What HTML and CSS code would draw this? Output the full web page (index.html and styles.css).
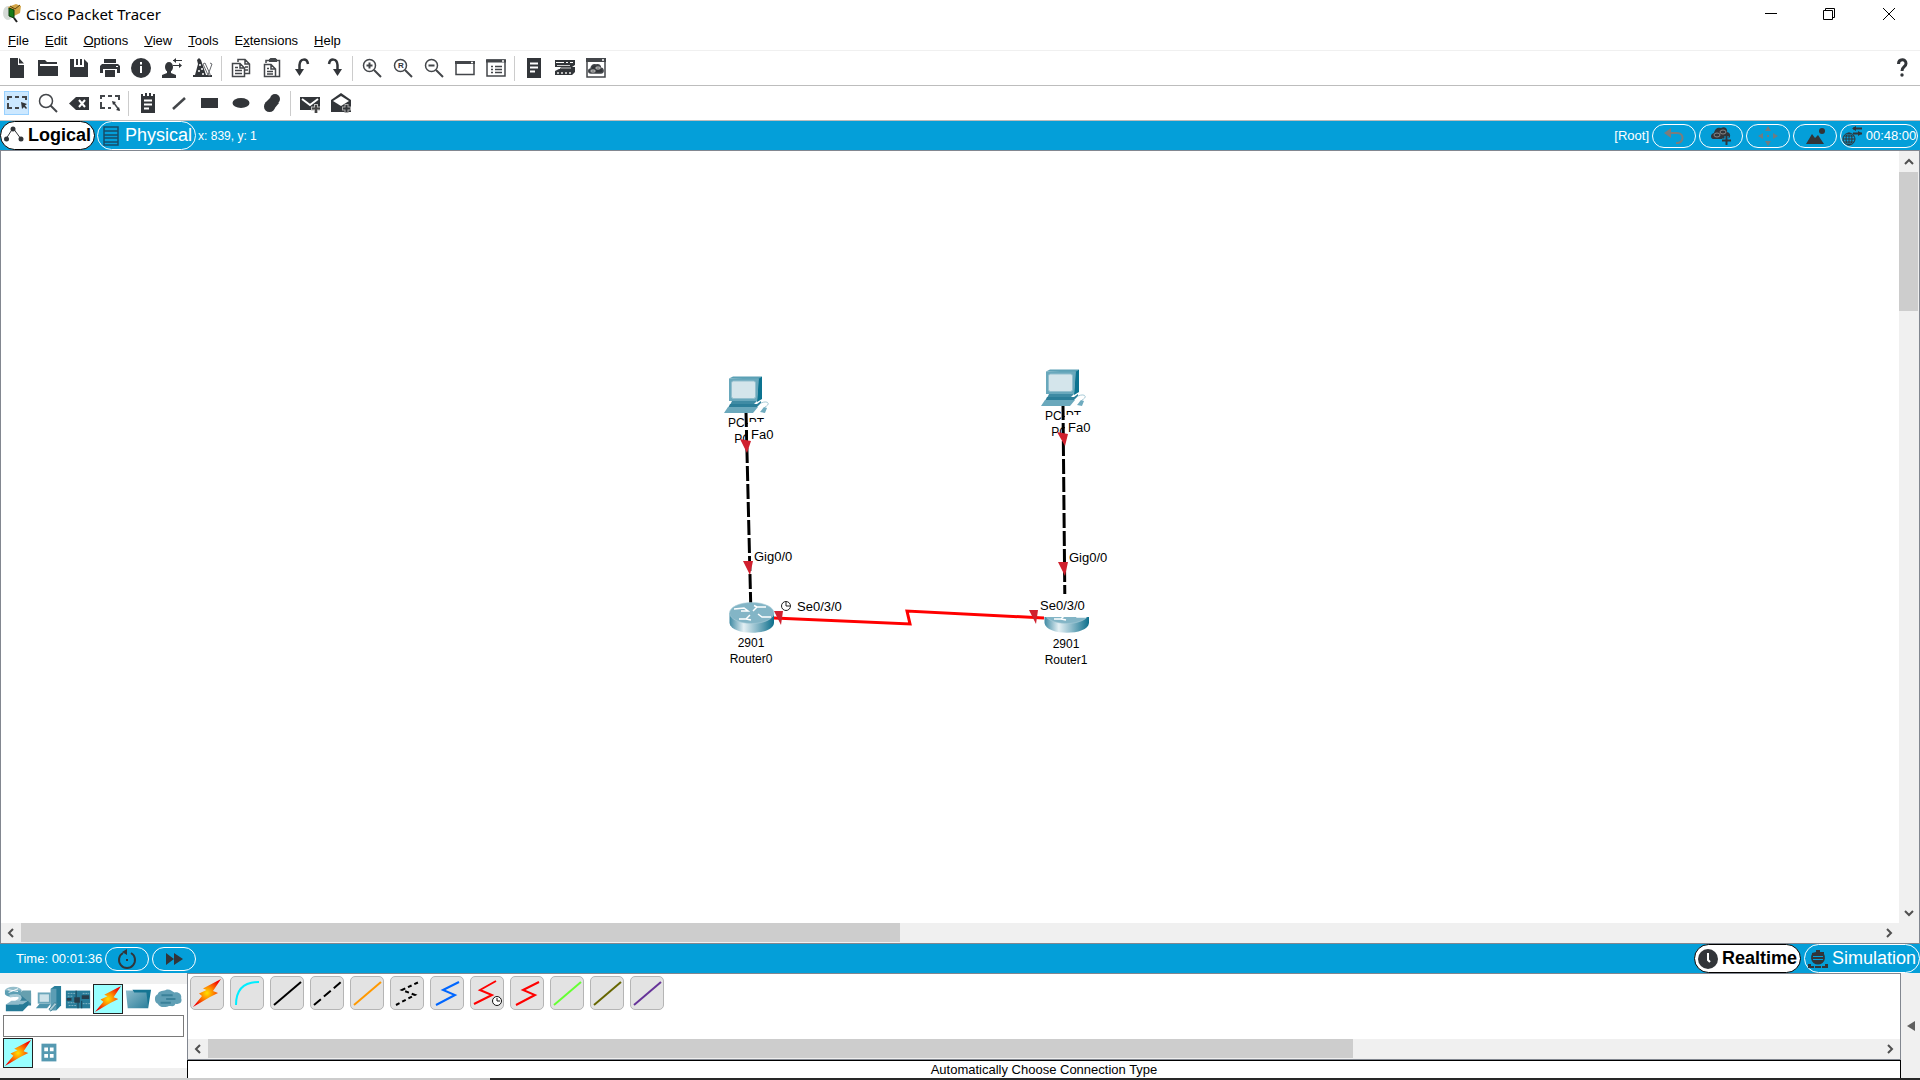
FILE: index.html
```html
<!DOCTYPE html>
<html lang="en">
<head>
    <meta charset="UTF-8">
    <meta name="viewport" content="width=device-width, initial-scale=1.0">
    <title>Cisco Packet Tracer</title>
    <link rel="stylesheet" href="styles.css">
</head>
<body>
    <!-- shared shapes -->
    <svg class="defs" aria-hidden="true">
        <defs>
            <radialGradient id="fire" cx="50%" cy="50%" r="55%">
                <stop offset="0" stop-color="#ffe000"/>
                <stop offset="0.4" stop-color="#ff8a00"/>
                <stop offset="1" stop-color="#f20000"/>
            </radialGradient>
            <linearGradient id="drum" x1="0" x2="1" y1="0" y2="0">
                <stop offset="0" stop-color="#3f8aa3"/>
                <stop offset="0.32" stop-color="#e4f0f4"/>
                <stop offset="0.6" stop-color="#8fbccb"/>
                <stop offset="1" stop-color="#0b6e8b"/>
            </linearGradient>
            <linearGradient id="steel" x1="0" x2="1" y1="0" y2="1">
                <stop offset="0" stop-color="#8dbccc"/>
                <stop offset="1" stop-color="#2c7f9b"/>
            </linearGradient>
            <symbol id="bolt" viewBox="0 0 30 30">
                <path d="M29 1 21 13 26 15 18 19 1 29 10 18 7 15.500 14.500 12 11 10.500Z" fill="url(#fire)"/>
            </symbol>
            <symbol id="pc" viewBox="0 0 46 38">
                <path d="M5 2.500 9 0.500H38L34 3.500Z" fill="#5ba0b5"/>
                <path d="M34 3 38 0.500V23L33 26Z" fill="#0c7390"/>
                <path d="M5 2.500H35L33 25H5Z" fill="#69a8bc"/>
                <rect x="7.500" y="5" width="24" height="17.500" rx="2" fill="#d4e5eb" stroke="#93bfce"/>
                <path d="M8 25H33L29 29H6Z" fill="#3f8ba4"/>
                <path d="M6 28H33L37 25V27L32 32H4Z" fill="#2c7e99"/>
                <path d="M4 31H34L29 37H0Z" fill="#6aa8bc"/>
                <path d="M37 27C44 24 47 28 41 31" fill="none" stroke="#a7cbd7"/>
                <path d="M36 36 40 31 43 32 41 37Z" fill="#6fabbf"/>
            </symbol>
            <symbol id="router" viewBox="0 0 46 32">
                <path d="M0.500 11V21C2 34 44 34 45 21V11Z" fill="url(#drum)"/>
                <ellipse cx="22.750" cy="11" rx="22.250" ry="10.500" fill="#83b5c6" stroke="#a9ccd8" stroke-width="0.600"/>
                <path d="M5 7 15 6 19 9 12 9M29 12 33 15H42M24 9 28 5 37 5M28 5 25 3.500M21 13 17 17 10 17M17 17 22 18" fill="none" stroke="#fff" stroke-width="1.500"/>
            </symbol>
        </defs>
    </svg>

    <header class="titlebar">
        <svg class="logo" viewBox="0 0 20 20">
            <ellipse cx="6" cy="9" rx="5" ry="7" fill="#d5dad6"/>
            <path d="M6 3 14 0 19 2 18 9 10 13Z" fill="#d3a548"/>
            <path d="M8 2 13 5 18 1" fill="none" stroke="#5d4510"/>
            <path d="M7 4 12 6V14L7 12Z" fill="#167c18" stroke="#0b3d0d"/>
            <path d="M12 14 15 18" stroke="#222" stroke-width="2"/>
        </svg>
        <h1>Cisco Packet Tracer</h1>
        <div class="window-buttons">
            <button aria-label="Minimize"><svg viewBox="0 0 12 12"><path d="M0 5.500H12"/></svg></button>
            <button aria-label="Restore"><svg viewBox="0 0 12 12"><path d="M0.500 2.500H9.500V11.500H0.500ZM2.500 2.500V0.500H11.500V9.500H9.500"/></svg></button>
            <button aria-label="Close"><svg viewBox="0 0 12 12"><path d="M0 0 12 12M12 0 0 12"/></svg></button>
        </div>
    </header>

    <nav class="menubar">
        <a href="#"><u>F</u>ile</a>
        <a href="#"><u>E</u>dit</a>
        <a href="#"><u>O</u>ptions</a>
        <a href="#"><u>V</u>iew</a>
        <a href="#"><u>T</u>ools</a>
        <a href="#">E<u>x</u>tensions</a>
        <a href="#"><u>H</u>elp</a>
    </nav>

    <div class="toolbar">
        <button aria-label="New"><svg viewBox="0 0 20 20"><path d="M3 0H11V7H17V20H3ZM12 0 17 5.500H12Z"/></svg></button>
        <button aria-label="Open"><svg viewBox="0 0 20 20"><path d="M0 2H7L9 4H19V6H2V8H20V18H0Z"/></svg></button>
        <button aria-label="Save"><svg viewBox="0 0 20 20"><path d="M1 1H5V9H15V1L19 5V19H1ZM7 1H9V7H7ZM11 1H13V7H11Z"/></svg></button>
        <button aria-label="Print"><svg viewBox="0 0 20 20"><path d="M4 1H16V5H4ZM2 6H18L20 8V15H17V11H3V15H0V8ZM5 12H15V19H5Z"/><path d="M16 8.500H18" stroke="#fff"/></svg></button>
        <button aria-label="Info"><svg viewBox="0 0 20 20"><circle cx="10" cy="10" r="10"/><path d="M10 4V6.500M10 8V15" stroke="#fff" stroke-width="2"/></svg></button>
        <button aria-label="User profile"><svg viewBox="0 0 20 20"><ellipse cx="7" cy="9" rx="4" ry="5"/><path d="M5 12H9V15L14 17V20H0V17L5 15Z"/><path d="M11 2.500H20M11 7.500H19" stroke="#323539"/><path d="M11 2.500 14 0V5ZM20 7.500 17 5V10Z"/></svg></button>
        <button aria-label="Palette"><svg viewBox="0 0 20 20"><path d="M4 2 6 0 8 2 13 17H19V19H0V17H2L5 6Z"/><g fill="#fff"><circle cx="7" cy="7" r="1"/><circle cx="9" cy="11" r="1"/><circle cx="6" cy="13" r="1"/><circle cx="10" cy="16" r="1"/></g><path d="M10 6 12 5 17 16V18L15 17ZM17 5 19 6 15 17" stroke="#66686c" fill="none"/></svg></button>
        <span class="sep"></span>
        <button aria-label="Copy"><svg class="line" viewBox="0 0 20 20"><path d="M7 4V1.500H14L18.500 6V15.500H14M14 2V6H18M1.500 5.500H9L13.500 10V18.500H1.500ZM9 6V10H13M4 9.500H7M4 12.500H11M4 15.500H11M14 9H17M14 12H17"/></svg></button>
        <button aria-label="Paste"><svg class="line" viewBox="0 0 20 20"><path d="M4 5V2.500H17.500V18.500H14M7 2.500 9 0.500H13L15 2.500ZM2.500 6.500H9L13.500 11V18.500H2.500ZM9 7V11H13M5 10.500H7M5 13.500H11M5 16H11"/><path d="M7 1H15V4H7Z" fill="#43464a" stroke="none"/></svg></button>
        <button aria-label="Undo"><svg viewBox="0 0 20 20"><path d="M15 6C14 0 7 0 6.500 7V13" fill="none" stroke="#323539" stroke-width="2.500"/><path d="M2 11H11L6.500 18Z"/></svg></button>
        <button aria-label="Redo"><svg viewBox="0 0 20 20"><path d="M5 6C6 0 13 0 13.500 7V13" fill="none" stroke="#323539" stroke-width="2.500"/><path d="M9 11H18L13.500 18Z"/></svg></button>
        <span class="sep"></span>
        <button aria-label="Zoom in"><svg class="line" viewBox="0 0 20 20"><circle cx="7.500" cy="7.500" r="6"/><path d="M12 12 19 19M4.500 7.500H10.500M7.500 4.500V10.500" stroke-width="2"/></svg></button>
        <button aria-label="Zoom reset"><svg class="line" viewBox="0 0 20 20"><circle cx="7.500" cy="7.500" r="6"/><path d="M12 12 19 19" stroke-width="2"/><text x="5" y="10">R</text></svg></button>
        <button aria-label="Zoom out"><svg class="line" viewBox="0 0 20 20"><circle cx="7.500" cy="7.500" r="6"/><path d="M12 12 19 19M4.500 7.500H10.500" stroke-width="2"/></svg></button>
        <button aria-label="Viewport"><svg class="line" viewBox="0 0 20 20"><path d="M1 4.500H19V16.500H1Z"/><path d="M0 4.500H20" stroke-width="3"/><path d="M16 4.500H18" stroke="#fff"/></svg></button>
        <button aria-label="Dialog"><svg class="line" viewBox="0 0 20 20"><path d="M1 2H19V18H1Z"/><path d="M0 3H20" stroke-width="3"/><path d="M16 3H18" stroke="#fff"/><path d="M5 8.500H7M9 8.500H16M5 11.500H7M9 11.500H16M5 14.500H7M9 14.500H16"/></svg></button>
        <span class="sep"></span>
        <button aria-label="Command log"><svg viewBox="0 0 20 20"><path d="M3 0H17V20H3Z"/><path d="M6 5.500H14M6 9.500H14M6 13.500H11" stroke="#fff" stroke-width="2"/></svg></button>
        <button aria-label="Custom devices"><svg viewBox="0 0 20 20"><path d="M0 2H20V7L17 9H20V14L17 17H0V13L4 11H5L6 9H0Z"/><path d="M1 4.500H9M11 4.500H13M15 4.500H18" stroke="#fff"/><path d="M2 7.500H15M6 10H16" stroke="#ccc"/><path d="M2 15H16" stroke="#bbb" stroke-width="2" stroke-dasharray="2 2"/></svg></button>
        <button aria-label="Cluster"><svg class="line" viewBox="0 0 20 20"><path d="M1 1.500H19V19H1Z"/><path d="M0 2H20" stroke-width="4"/><path d="M16 2H18" stroke="#fff"/><path d="M5 15C2 15 2 11 5 11C5 8 7 6 10 7C13 6 15 8 14 10C18 10 18 15 15 15Z" fill="#323539"/><ellipse cx="7" cy="13" rx="2" ry="1" stroke="#aaa"/><ellipse cx="12" cy="10" rx="2" ry="1" stroke="#aaa"/></svg></button>
        <button class="help" aria-label="Help"><svg viewBox="0 0 20 20"><path d="M6.500 6C6.500 0.500 14 0.500 14 5.500C14 9 10 8.500 10 13" fill="none" stroke="#323539" stroke-width="3"/><circle cx="10" cy="17" r="1.700"/></svg></button>
    </div>

    <div class="toolbar">
        <button class="active" aria-label="Select"><svg class="line" viewBox="0 0 20 20"><path d="M1 7V4H5M8 4H12M15 4H19V7M1 10V15H5M8 15H12" stroke-width="2"/><path d="M14 9 20 11 18 12.500 20 15 19 16 17 14 15 16Z" fill="#323539" stroke="none"/></svg></button>
        <button aria-label="Inspect"><svg class="line" viewBox="0 0 20 20"><circle cx="8" cy="8" r="6.500"/><path d="M12.500 12.500 19 19" stroke-width="2"/></svg></button>
        <button aria-label="Delete"><svg viewBox="0 0 20 20"><path d="M7 4H20V17H7L0 10.500Z"/><path d="M10 7 16 14M16 7 10 14" stroke="#fff" stroke-width="2"/></svg></button>
        <button aria-label="Resize shape"><svg class="line" viewBox="0 0 20 20"><path d="M1 6V3H5M8 3H12M15 3H19V7M1 9V15H5M8 15H11" stroke-width="2"/><path d="M14 10 19 17"/><path d="M12 8 16 9 13 12ZM20 18 16 17 19 14Z" fill="#323539" stroke="none"/></svg></button>
        <span class="sep"></span>
        <button aria-label="Place note"><svg viewBox="0 0 20 20"><path d="M3 1H5V3H7V0H9V3H11V0H13V3H15V1H17V20H3Z"/><path d="M6 7.500H14M6 11.500H14M6 15.500H11" stroke="#fff" stroke-width="2"/></svg></button>
        <button aria-label="Draw line"><svg class="line" viewBox="0 0 20 20"><path d="M4 16 16 5" stroke-width="2.500"/></svg></button>
        <button aria-label="Draw rectangle"><svg viewBox="0 0 20 20"><path d="M1 5H18V15H1Z"/></svg></button>
        <button aria-label="Draw ellipse"><svg viewBox="0 0 20 20"><ellipse cx="10" cy="10" rx="8.500" ry="5"/></svg></button>
        <button aria-label="Draw freeform"><svg viewBox="0 0 20 20"><circle cx="13" cy="6" r="5"/><circle cx="7.500" cy="13.500" r="5.500"/><path d="M8 5 17 10 12 16 3 10Z"/></svg></button>
        <span class="sep"></span>
        <button aria-label="Add simple PDU"><svg viewBox="0 0 20 20"><path d="M0 4H20V17H0Z"/><path d="M2 6 10 12 18 6" fill="none" stroke="#fff" stroke-width="2"/><path d="M16 11V20M11 15.500H20" stroke="#bbb" stroke-width="4"/><path d="M16 12V20M12 15.500H20" stroke="#444" stroke-width="2"/></svg></button>
        <button aria-label="Add complex PDU"><svg viewBox="0 0 20 20"><path d="M0 7 10 0 20 7V19H0Z"/><path d="M2 8 10 3 18 8 10 13Z" fill="#fff"/><path d="M15.500 11V20M11 15.500H20" stroke="#aaa" stroke-width="4"/><path d="M15.500 12V19M12 15.500H19" stroke="#323539" stroke-width="2"/></svg></button>
    </div>

    <div class="bluebar">
        <button class="tab selected"><svg viewBox="0 0 20 20"><path d="M2 13 9 2 17 13" fill="none" stroke="#323539"/><circle cx="2.500" cy="13" r="2.500"/><circle cx="9" cy="3" r="2.500"/><circle cx="17" cy="13" r="2.500"/></svg>Logical</button>
        <button class="tab"><svg viewBox="0 0 20 20"><path d="M3 1H17V19H3ZM3 5H17M3 9H17M3 12H17M3 16H17" fill="none" stroke="#164d69" stroke-width="1.500"/></svg>Physical</button>
        <span class="coords">x: 839, y: 1</span>
        <div class="bar-right">
            <span>[Root]</span>
            <button class="pill" aria-label="Back"><svg viewBox="0 0 20 20"><path d="M5 7H13C21 7 20 18 12 17" fill="none" stroke="#7c7c7c" stroke-width="2"/><path d="M0 7 7 2V12Z" fill="#7c7c7c"/></svg></button>
            <button class="pill" aria-label="New cluster"><svg viewBox="0 0 20 20"><path d="M3 13C-1 13-1 8 3 7C4 2 7 1 10 2C14 0 17 3 16 6C20 7 20 11 17 13Z"/><ellipse cx="6" cy="9" rx="3" ry="2" fill="none" stroke="#888"/><ellipse cx="12" cy="6" rx="3" ry="2" fill="none" stroke="#888"/><path d="M15.500 10V19M11 14.500H20" stroke="#049fd9" stroke-width="4"/><path d="M15.500 10V19M11 14.500H20" stroke="#323539" stroke-width="2"/></svg></button>
            <button class="pill" aria-label="Move object"><svg viewBox="0 0 20 20"><path d="M10 0 13 5H7ZM10 20 13 15H7ZM0 10 5 7V13ZM20 10 15 7V13ZM9 9H11V11H9Z" fill="#6f7c82"/></svg></button>
            <button class="pill" aria-label="Set background"><svg viewBox="0 0 20 20"><path d="M1 18 7 8 10 12 13 9 19 18Z"/><circle cx="17" cy="5" r="3"/></svg></button>
            <button class="pill clock" aria-label="Environment time 00:48:00"><svg viewBox="0 0 20 20"><g fill="none" stroke="#323539"><circle cx="7" cy="13" r="6"/><ellipse cx="7" cy="13" rx="3" ry="6"/><path d="M7 7V19M1 13H13M2 10H12M2 16H12"/><path d="M11 2.500H20M11 7.500H20" stroke-width="2"/></g><path d="M10 2.500 14 0V5ZM20 7.500 16 5V10Z"/></svg>00:48:00</button>
        </div>
    </div>

    <main class="workspace">
        <svg class="topology" role="img" aria-label="Network topology">
            <g transform="translate(-1 -151)">
                <g class="labels">
                    <text x="746" y="427">PC-PT</text>
                    <text x="746" y="443">PC0</text>
                    <text x="1063" y="420">PC-PT</text>
                    <text x="1063" y="436">PC1</text>
                    <text x="751" y="647">2901</text>
                    <text x="751" y="663">Router0</text>
                    <text x="1066" y="648">2901</text>
                    <text x="1066" y="664">Router1</text>
                </g>
                <path class="crossover" d="M746 412 751 616M1063 405 1065 616"/>
                <use href="#pc" x="724" y="376" width="46" height="38"/>
                <use href="#pc" x="1041" y="369" width="46" height="38"/>
                <use href="#router" x="729" y="602" width="46" height="32"/>
                <use href="#router" x="1044" y="602" width="46" height="32"/>
                <!-- interface labels sit on white boxes -->
                <path fill="#fff" d="M748 422H776V445H748ZM751 546H795V566H751ZM1065 415H1093V438H1065ZM1066 547H1110V567H1066ZM1037 594H1092V617H1037Z"/>
                <path class="serial" d="M774 618 910 624 907 611 1044 618"/>
                <g class="ports">
                    <text x="751" y="439">Fa0</text>
                    <text x="754" y="561">Gig0/0</text>
                    <text x="797" y="611">Se0/3/0</text>
                    <text x="1068" y="432">Fa0</text>
                    <text x="1069" y="562">Gig0/0</text>
                    <text x="1040" y="610">Se0/3/0</text>
                </g>
                <path fill="#d0202e" d="M740 439 751 441 747 453ZM743 561H753L750 575ZM774 611H783L781 625ZM1057 432 1068 434 1065 446ZM1058 562H1068L1065 576ZM1029 610H1038L1036 624Z"/>
                <g fill="none" stroke="#222"><circle cx="786" cy="606" r="4.500"/><path d="M786 602V606H790"/></g>
            </g>
        </svg>
        <div class="vscroll">
            <button aria-label="Scroll up"><svg viewBox="0 0 10 10"><path d="M1 7 5 3 9 7"/></svg></button>
            <div class="track"><div class="thumb"></div></div>
            <button aria-label="Scroll down"><svg viewBox="0 0 10 10"><path d="M1 3 5 7 9 3"/></svg></button>
        </div>
        <div class="hscroll">
            <button aria-label="Scroll left"><svg viewBox="0 0 10 10"><path d="M7 1 3 5 7 9"/></svg></button>
            <div class="track"><div class="thumb"></div></div>
            <button aria-label="Scroll right"><svg viewBox="0 0 10 10"><path d="M3 1 7 5 3 9"/></svg></button>
        </div>
    </main>

    <div class="bluebar timebar">
        <span class="time">Time: 00:01:36</span>
        <button class="pill" aria-label="Power cycle devices"><svg viewBox="0 0 20 20"><path d="M6 4A8 8 0 1 0 14 4" fill="none" stroke="#323539" stroke-width="2"/><path d="M5 3 10 0V6ZM9 10H11V12H9Z"/></svg></button>
        <button class="pill" aria-label="Fast forward"><svg viewBox="0 0 20 20"><path d="M2 4 10 10V4L19 10 10 16V10L2 16Z"/></svg></button>
        <div class="modes">
            <button class="tab selected"><svg viewBox="0 0 20 20"><circle cx="10" cy="10" r="10"/><path d="M10 4V11L12 13" fill="none" stroke="#fff" stroke-width="2"/></svg>Realtime</button>
            <button class="tab"><svg viewBox="0 0 20 20"><path d="M8 1H12V3H16V5A7 7 0 1 1 4 5V4L8 3ZM0 15H3V17H6V19H0ZM7 17H13V19H7ZM17 15H20V19H14V17H17Z"/><path d="M5 7.500H15M5 10.500H15" stroke="#049fd9"/></svg>Simulation</button>
        </div>
    </div>

    <footer class="bottom">
        <section class="categories">
            <div class="cell-row">
                <button aria-label="Network devices"><svg viewBox="0 0 30 30"><path d="M16 9H29V22H16Z" fill="#377f99"/><path d="M16 9 20 6H29V20" fill="#669faf"/><ellipse cx="10" cy="6" rx="9" ry="4" fill="#94bdca"/><path d="M1 6V10C4 14 14 14 18 9V6Z" fill="#5c9fb4"/><path d="M4 5 15 7M5 8 15 4" stroke="#fff"/><path d="M6 12C18 9 21 14 13 18" fill="none" stroke="#a5c9d5" stroke-width="3"/><path d="M2 21 8 17H26L20 21Z" fill="#8ebaca"/><path d="M2 21H20L26 17V22L20 28H2Z" fill="#267a96"/></svg></button>
                <button aria-label="End devices"><svg viewBox="0 0 30 30"><path d="M18 4 22 1H29V22L24 27H18Z" fill="#287e9a"/><path d="M18 4H24V27H18Z" fill="#5b9db4"/><path d="M4 8H18V20H4Z" fill="#6ba6ba"/><path d="M6 10H16V18H6Z" fill="#cde2e9"/><path d="M6 20H18L14 25H2Z" fill="#4d94ac"/><path d="M16 26 22 19 25 20 18 28Z" fill="#a9cad5" stroke="#397f97"/></svg></button>
                <button aria-label="Components"><svg viewBox="0 0 30 30"><path d="M2 6H28V25H2Z" fill="#287c99"/><path d="M4 9H12M4 12H10M4 19H12M20 9H27M20 20H28M5 22H14" stroke="#89b8c7" stroke-dasharray="2 1"/><path d="M11 13H17V19H11ZM19 11H27V15H19ZM3 14H8V17H3Z" fill="#263d4b"/><path d="M13 6V13M15 19V25M19 17V25" stroke="#173d50"/></svg></button>
                <button class="picked" aria-label="Connections"><svg><use href="#bolt"/></svg></button>
                <button aria-label="Miscellaneous"><svg viewBox="0 0 30 30"><path d="M9 5H29L26 24H18Z" fill="#157593"/><path d="M2 6H9L11 8H24L26 25H4Z" fill="url(#steel)"/></svg></button>
                <button aria-label="Multiuser connection"><svg viewBox="0 0 30 30"><path d="M4 20C0 19 0 11 4 10C5 5 11 7 13 5C17 4 20 7 22 8C28 7 30 12 29 14C31 19 27 21 23 20C21 25 17 21 15 23C10 24 6 24 4 20Z" fill="#609fb5"/><path d="M8 11H20M13 15H23M7 19H18" stroke="#3a8199" stroke-width="2"/></svg></button>
            </div>
            <input type="text" aria-label="Device">
            <div class="cell-row">
                <button class="picked" aria-label="All connections"><svg><use href="#bolt"/></svg></button>
                <button aria-label="Structured cabling"><svg viewBox="0 0 30 30"><path d="M8 5H24V24H8Z" fill="#5599b1"/><path d="M11 9H15V13H11ZM17 9H21V13H17ZM11 16H15V20H11ZM17 16H21V20H17Z" fill="#fff"/></svg></button>
            </div>
        </section>

        <section class="connections">
            <div class="picker">
                <div class="cables">
                    <button aria-label="Automatic"><svg><use href="#bolt"/></svg></button>
                    <button aria-label="Console"><svg viewBox="0 0 30 30"><path d="M4 27C4 12 12 4 27 4" stroke="#0ef"/></svg></button>
                    <button aria-label="Copper straight-through"><svg viewBox="0 0 30 30"><path d="M2 27 29 4" stroke="#000"/></svg></button>
                    <button aria-label="Copper cross-over"><svg viewBox="0 0 30 30"><path d="M2 27 29 4" stroke="#000" stroke-dasharray="9 4"/></svg></button>
                    <button aria-label="Fiber"><svg viewBox="0 0 30 30"><path d="M2 27 29 4" stroke="#f90"/></svg></button>
                    <button aria-label="Phone"><svg viewBox="0 0 30 30"><path d="M4 27 23 17 10 12 27 4" stroke="#000" stroke-dasharray="4 3"/></svg></button>
                    <button aria-label="Coaxial"><svg viewBox="0 0 30 30"><path d="M4 27 23 17 11 12 27 4" stroke="#06f"/></svg></button>
                    <button aria-label="Serial DCE"><svg viewBox="0 0 30 30"><path d="M2 26 20 17 8 12 24 3" stroke="#f00"/><circle cx="25" cy="23" r="4.500" fill="#fff" stroke="#111" stroke-width="1"/><path d="M25 20V23H28" stroke="#111" stroke-width="1"/></svg></button>
                    <button aria-label="Serial DTE"><svg viewBox="0 0 30 30"><path d="M4 27 23 17 11 12 27 4" stroke="#f00"/></svg></button>
                    <button aria-label="Octal"><svg viewBox="0 0 30 30"><path d="M2 27 29 4" stroke="#6f3"/></svg></button>
                    <button aria-label="IoE custom cable"><svg viewBox="0 0 30 30"><path d="M2 27 29 4" stroke="#660"/></svg></button>
                    <button aria-label="USB"><svg viewBox="0 0 30 30"><path d="M2 27 29 4" stroke="#639"/></svg></button>
                </div>
                <div class="hscroll">
                    <button aria-label="Scroll left"><svg viewBox="0 0 10 10"><path d="M7 1 3 5 7 9"/></svg></button>
                    <div class="track"><div class="thumb wide"></div></div>
                    <button aria-label="Scroll right"><svg viewBox="0 0 10 10"><path d="M3 1 7 5 3 9"/></svg></button>
                </div>
            </div>
            <p class="hint">Automatically Choose Connection Type</p>
        </section>

        <button class="expand" aria-label="Show PDU list"><svg viewBox="0 0 8 10"><path d="M0 5 8 0V10Z"/></svg></button>
    </footer>
    <div class="taskbar"><span></span><span></span></div>
</body>
</html>
```

FILE: styles.css
```css
* {
    margin: 0;
    padding: 0;
    box-sizing: border-box;
}

body {
    display: flex;
    flex-direction: column;
    height: 100vh;
    overflow: hidden;
    background: #fff;
    color: #000;
    font-family: "Liberation Sans", Arial, sans-serif;
    font-size: 13px;
}

button {
    display: flex;
    align-items: center;
    justify-content: center;
    flex-shrink: 0;
    border: none;
    background: none;
    font: inherit;
    color: inherit;
}

svg {
    display: block;
    fill: #323539;
}

.defs {
    position: absolute;
    width: 0;
    height: 0;
}

/* title and menu */
.titlebar {
    display: flex;
    align-items: center;
    height: 28px;
    padding-left: 2px;
}

.logo {
    width: 20px;
    height: 20px;
    margin-right: 4px;
}

.titlebar h1 {
    font-family: "Noto Sans", sans-serif;
    font-size: 15px;
    font-weight: normal;
}

.window-buttons {
    display: flex;
    margin-left: auto;
}

.window-buttons button {
    width: 58px;
    height: 28px;
}

.window-buttons button:last-child {
    width: 62px;
}

.window-buttons svg {
    width: 12px;
    height: 12px;
    fill: none;
    stroke: #000;
}

.menubar {
    display: flex;
    gap: 16px;
    height: 23px;
    padding: 5px 8px 0;
    border-bottom: 1px solid #f0f0f0;
}

.menubar a {
    color: #000;
    text-decoration: none;
}

/* toolbars */
.toolbar {
    display: flex;
    align-items: center;
    gap: 6px;
    height: 35px;
    padding: 0 6px 0 4px;
    border-bottom: 1px solid #bdbdbd;
}

.toolbar button {
    width: 25px;
    height: 24px;
}

.toolbar svg {
    width: 20px;
    height: 20px;
}

.toolbar .line {
    fill: none;
    stroke: #43464a;
    stroke-width: 1.5;
}

.toolbar text {
    fill: #323539;
    stroke: none;
    font-size: 8px;
    font-weight: bold;
}

.toolbar .active {
    background: #cce8ff;
    border: 1px solid #99d1ff;
}

.sep {
    width: 1px;
    height: 25px;
    background: #ccc;
}

.toolbar .help {
    margin-left: auto;
}

/* blue bars */
.bluebar {
    display: flex;
    align-items: center;
    flex-shrink: 0;
    gap: 2px;
    height: 29px;
    background: #049fd9;
    color: #fff;
}

.tab {
    gap: 4px;
    height: 29px;
    padding: 0 3px;
    border: 1px solid #fff;
    border-radius: 15px;
    font-size: 18px;
}

.tab.selected {
    background: #fff;
    border-color: #000;
    color: #000;
    font-weight: bold;
}

.tab svg,
.pill svg {
    width: 20px;
    height: 20px;
}

.coords {
    font-size: 12px;
}

.bar-right,
.modes {
    display: flex;
    align-items: center;
    gap: 3px;
    margin-left: auto;
}

.bar-right {
    padding-right: 2px;
}

.pill {
    width: 44px;
    height: 24px;
    border: 1px solid #fff;
    border-radius: 12px;
}

.pill.clock {
    gap: 4px;
    width: 78px;
}

.timebar {
    gap: 3px;
    padding-left: 16px;
}

/* workspace */
.workspace {
    display: grid;
    grid-template-columns: 1fr 20px;
    grid-template-rows: 1fr 20px;
    flex: 1;
    min-height: 0;
    border: 1px solid #828790;
    background: #f0f0f0;
}

.topology {
    width: 100%;
    height: 100%;
    background: #fff;
}

.labels,
.ports {
    fill: #000;
    font-size: 13px;
}

.labels {
    font-size: 12px;
    text-anchor: middle;
}

.crossover {
    fill: none;
    stroke: #000;
    stroke-width: 3;
    stroke-dasharray: 15 3;
}

.serial {
    fill: none;
    stroke: #f00;
    stroke-width: 3;
}

.vscroll,
.hscroll {
    display: flex;
    background: #f0f0f0;
}

.vscroll {
    flex-direction: column;
    padding-right: 1px;
}

.hscroll {
    padding-bottom: 1px;
}

.vscroll button {
    width: 19px;
    height: 21px;
}

.hscroll button {
    width: 20px;
    height: 19px;
}

.vscroll svg,
.hscroll svg {
    width: 10px;
    height: 10px;
    fill: none;
    stroke: #505050;
    stroke-width: 2;
}

.track {
    flex: 1;
}

.thumb {
    width: 47.3%;
    height: 100%;
    background: #cdcdcd;
}

.thumb.wide {
    width: 68.5%;
}

.vscroll .thumb {
    width: 100%;
    height: 19%;
}

/* bottom panels */
.bottom {
    display: flex;
    flex-shrink: 0;
    background: #f0f0f0;
}

.categories {
    width: 187px;
    margin: 11px 0 10px;
    padding: 0 3px;
    background: #fff;
}

.cell-row {
    display: flex;
}

.cell-row button {
    width: 30px;
    height: 30px;
}

.cell-row svg {
    width: 28px;
    height: 28px;
}

.cell-row .picked {
    background: #9ff;
    border: 1px solid #222;
}

.categories input {
    display: block;
    width: 100%;
    height: 22px;
    margin: 1px 0;
    border: 1px solid #7a7a7a;
}

.connections {
    display: flex;
    flex-direction: column;
    flex: 1;
    min-width: 0;
}

.picker {
    border: 1px solid #828790;
    background: #fff;
}

.cables {
    display: flex;
    gap: 6px;
    height: 65px;
    padding: 2px;
}

.cables button {
    width: 34px;
    height: 34px;
    border: 1px solid #b5b5b5;
    border-radius: 5px;
    background: #e3e3e3;
}

.cables svg {
    width: 30px;
    height: 30px;
    fill: none;
    stroke-width: 2;
}

.hint {
    flex: 1;
    border: 1px solid #000;
    border-bottom: none;
    background: #fff;
    line-height: 17px;
    text-align: center;
}

.expand {
    width: 19px;
}

.expand svg {
    width: 8px;
    height: 10px;
    fill: #606060;
}

.taskbar {
    display: flex;
    flex-shrink: 0;
    height: 2px;
    background: #282828;
}

.taskbar span {
    width: 60px;
}

.taskbar span:last-child {
    width: 430px;
    background: #ccc;
}
```
